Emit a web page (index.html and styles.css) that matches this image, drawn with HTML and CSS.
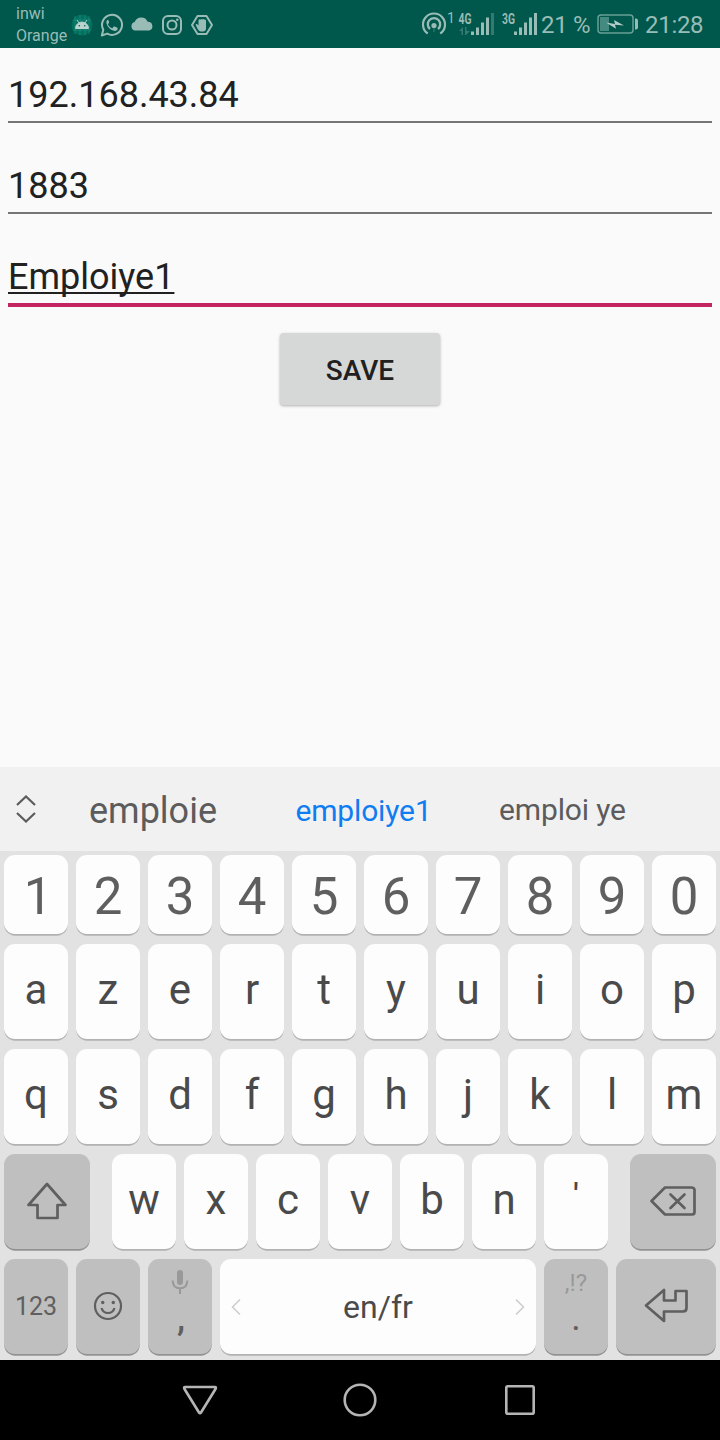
FILE: index.html
```
<!DOCTYPE html>
<html lang="en">
<head>
<meta charset="utf-8">
<title>Connection settings</title>
<link rel="stylesheet" href="styles.css">
</head>
<body>
<div class="screen">
  <header class="status">
    <div class="carriers"><span>inwi</span><span>Orange</span></div>
    <svg class="notifications" width="144" height="26" viewBox="0 0 144 26" fill="none" stroke="#99bcb7">
      <circle cx="11" cy="13" r="10.500" fill="#00705f" stroke="none"/>
      <path d="M4 4v18M9 3v20M14 3v20M18 4v18M2 8h18M2 18h18" stroke="#2b9283" stroke-width=".6"/>
      <path d="M4.500 16.500a6.500 6.500 0 0 1 13 0zM6 8l2 3M16 8l-2 3" fill="#bad3cf" stroke="#bad3cf" stroke-width="1"/>
      <circle cx="8.300" cy="13.800" r=".8" fill="#00574b" stroke="none"/><circle cx="13.700" cy="13.800" r=".8" fill="#00574b" stroke="none"/>
      <path d="M30.800 23.500l1.500-5.800a10 10 0 1 1 3.900 3.900z" stroke-width="2" stroke-linejoin="round"/>
      <path d="M37.400 7.500c-1.500.4-2.300 1.800-1.900 3.700.8 3.600 4.100 7.100 8.200 7.700 1.600.2 2.700-.8 2.900-2.200.1-.7-.1-.9-.6-1.200l-2.500-1.100c-.5-.2-.7 0-1 .4l-.9 1.100c-.3.300-.6.300-1 .1-1.500-.7-2.700-1.800-3.500-3.300-.2-.4-.1-.6.200-.9l.7-1c.2-.3.200-.5.100-.9l-1-2.200c-.2-.3-.3-.3-.7-.2z" fill="#99bcb7" stroke="none"/>
      <path d="M64.500 18.500a4.400 4.400 0 0 1 0-8.500 7 7 0 0 1 13-.3 4.500 4.500 0 0 1 1.500 8.800z" fill="#99bcb7" stroke="none" transform="translate(-.8 0)"/>
      <rect x="92" y="4" width="18" height="18" rx="5" stroke-width="2"/><circle cx="101" cy="13" r="4.500" stroke-width="2"/><circle cx="106.300" cy="7.700" r="1.300" fill="#99bcb7" stroke="none"/>
      <g transform="translate(1 0)"><path d="M125.500 4h9l5.500 9-5.500 9h-9l-5.500-9z" stroke-width="2" stroke-linejoin="round"/>
      <path d="M126.500 8q1-1.200 1.800-.3 1-1.300 2-.3 1-.9 1.800.2 1.300-.5 1.900.8v8q0 2.600-3 3h-2.500q-2-.4-3-2.700l-2-4.300q1-1.200 3 1z" fill="#99bcb7" stroke="none"/></g>
    </svg>
    <svg class="signals" width="118" height="38" viewBox="0 -5 118 38" fill="#99bcb7">
      <g fill="none" stroke="#99bcb7" stroke-width="2.200"><path d="M6.700 22.500a11 11 0 1 1 12.600 0"/><path d="M9 18a6.200 6.200 0 1 1 8 0" stroke-width="2.300"/></g>
      <circle cx="13" cy="14.500" r="2.600"/><path d="M12 16h2v5h-2z" opacity=".2"/>
      <text class="net" x="26" y="11.500">1</text>
      <text class="net bold" x="37.500" y="12.500" textLength="13" lengthAdjust="spacingAndGlyphs">4G</text>
      <path d="M38 20l4-4v8h-1.500v-4zM44 16h1.500v4H49l-4 4h-1z" opacity=".35"/>
      <path d="M50 20.500h3V24h-3zM55 16.500h3V24h-3zM60 11.500h3V24h-3zM65 6.500h3V24h-3z"/><path d="M70 2h3v22h-3z" opacity=".35"/>
      <text class="net bold" x="81" y="12.500" textLength="13" lengthAdjust="spacingAndGlyphs">3G</text>
      <path d="M93 20.500h3V24h-3zM98 16.500h3V24h-3zM103 11.500h3V24h-3zM108 6.500h3V24h-3zM113 2h3v22h-3z"/>
    </svg>
    <span class="percent">21 %</span>
    <svg class="battery" width="42" height="20" viewBox="0 0 42 20">
      <rect x="1" y="1" width="35" height="18" rx="3" fill="none" stroke="#69a098" stroke-width="1.500"/>
      <path d="M3 3h9v14H3z" fill="#458a80"/><path d="M38 4.500h1q2 0 2 2v7q0 2-2 2h-1z" fill="#99bcb7"/>
      <path d="M9 8.500l9 1.500-1-4 10 5.500-9-.8 1 4z" fill="#b2ccc9"/>
    </svg>
    <span class="clock">21:28</span>
  </header>

  <main class="form">
    <div class="field">192.168.43.84</div>
    <div class="field">1883</div>
    <div class="field focused"><span class="composing">Emploiye1</span></div>
    <button class="save">SAVE</button>
  </main>

  <section class="keyboard">
    <div class="suggestions">
      <svg class="expand" width="22" height="28" viewBox="0 0 22 28" fill="none" stroke="#5c5c5c" stroke-width="2.200"><path d="M2 10l9-8.500 9 8.500M2 18l9 8.500 9-8.500"/></svg>
      <span class="word first">emploie</span>
      <span class="word typed">emploiye1</span>
      <span class="word last">emploi ye</span>
    </div>
    <div class="row digits">
      <div class="key one">1</div><div class="key">2</div><div class="key">3</div><div class="key">4</div><div class="key">5</div><div class="key">6</div><div class="key">7</div><div class="key">8</div><div class="key">9</div><div class="key">0</div>
    </div>
    <div class="row">
      <div class="key">a</div><div class="key">z</div><div class="key">e</div><div class="key">r</div><div class="key">t</div><div class="key">y</div><div class="key">u</div><div class="key">i</div><div class="key">o</div><div class="key">p</div>
    </div>
    <div class="row">
      <div class="key">q</div><div class="key">s</div><div class="key">d</div><div class="key">f</div><div class="key">g</div><div class="key">h</div><div class="key">j</div><div class="key">k</div><div class="key">l</div><div class="key">m</div>
    </div>
    <div class="row">
      <div class="key dark shift"><svg width="42" height="38" viewBox="0 0 42 38"><path d="M21 2L2.500 23H11.500V36H31.500V23H39.500z"/></svg></div>
      <div class="key">w</div><div class="key">x</div><div class="key">c</div><div class="key">v</div><div class="key">b</div><div class="key">n</div><div class="key quote">'</div>
      <div class="key dark delete"><svg width="48" height="32" viewBox="0 0 48 32"><path d="M2.500 16L16 2.500H42Q45.500 2.500 45.500 5V27Q45.500 29.500 43 29.500H16zM21.500 9.500l14 13.500M35.500 9.500L21.500 23" stroke-linecap="round"/></svg></div>
    </div>
    <div class="row">
      <div class="key dark mode">123</div>
      <div class="key dark emoji"><svg width="30" height="30" viewBox="0 0 30 30"><circle cx="15" cy="15" r="13"/><path d="M8.500 17q1.500 5 6.500 5t6.500-5"/><circle class="dot" cx="9.700" cy="11.500" r="1.700"/><circle class="dot" cx="20.300" cy="11.500" r="1.700"/></svg></div>
      <div class="key dark stacked"><svg width="18" height="26" viewBox="0 0 18 26"><rect class="mic" x="6" y="1" width="6" height="15" rx="3"/><path class="stand" d="M1.700 11.500q0 7.800 7.300 7.800t7.300-7.800M9 19v6"/></svg><span class="comma">,</span></div>
      <div class="key space"><svg width="10" height="18" viewBox="0 0 10 18"><path d="M9 1.500L1.500 9 9 16.500"/></svg><span>en/fr</span><svg width="10" height="18" viewBox="0 0 10 18"><path d="M1 1.500L8.500 9 1 16.500"/></svg></div>
      <div class="key dark stacked"><span class="hint">,!?</span><span class="period">.</span></div>
      <div class="key dark enter"><svg width="44" height="36" viewBox="0 0 44 36"><path d="M2 18.500L20 3V13.500H31.500V4H42.500V21Q42.500 24.500 39 24.500H20V34z"/></svg></div>
    </div>
  </section>

  <nav class="nav">
    <svg width="36" height="32" viewBox="0 0 36 32"><path d="M3.200 3H32.800Q34.500 3 33.500 5L19 28.500Q18 30 17 28.500L2.500 5Q1.500 3 3.200 3z"/></svg>
    <svg width="36" height="36" viewBox="0 0 36 36"><circle cx="18" cy="18" r="15.300"/></svg>
    <svg width="36" height="36" viewBox="0 0 36 36"><rect x="4.300" y="4.300" width="27.400" height="27.400" rx="1.500"/></svg>
  </nav>
</div>
</body>
</html>
```
FILE: styles.css
```
* { box-sizing: border-box; }
body { margin: 0; font-family: Roboto, "Liberation Sans", sans-serif; background: #fafafa; }
svg { display: block; flex: none; }
.screen { width: 720px; height: 1440px; display: flex; flex-direction: column; background: #fafafa; }

.status { height: 48px; flex: none; display: flex; align-items: center; background: #00574b; color: #99bcb7; font-size: 24px; white-space: nowrap; }
.carriers { width: 55px; margin-left: 16px; display: flex; flex-direction: column; font-size: 16px; line-height: 22px; padding-top: 1px; }
.notifications { margin-top: 2px; }
.signals { margin: 0 0 -1px 206px; }
.net { font-size: 14px; }
.bold { font-weight: 700; }
.percent { width: 56px; margin-left: 2px; padding-top: 2px; letter-spacing: -.3px; }
.clock { margin-left: 6px; padding-top: 2px; letter-spacing: -.3px; }

.form { height: 719px; flex: none; padding: 26px 8px 0; display: flex; flex-direction: column; }
.field { height: 49px; margin-bottom: 42px; border-bottom: 2px solid #757575; color: #212121; font-size: 36px; line-height: 42px; }
.focused { height: 51px; margin-bottom: 26px; border-bottom: 4px solid #c2255f; }
.composing { text-decoration: underline; text-decoration-thickness: 2px; text-underline-offset: 3px; text-decoration-skip-ink: none; }
.save { width: 160px; height: 72px; align-self: center; padding: 2px 0 0; border: 0; border-radius: 4px; background: #d6d8d7; color: #202020; font: 500 28px Roboto, sans-serif; box-shadow: 0 1px 3px rgba(0, 0, 0, .3); }

.keyboard { height: 593px; flex: none; background: #e2e2e2; }
.suggestions { height: 84px; margin-bottom: 4px; display: flex; align-items: center; background: #f1f1f1; color: #5c5c5c; font-size: 30px; }
.expand { margin-left: 15px; }
.word { text-align: center; white-space: nowrap; }
.first { width: 232px; font-size: 36px; padding-top: 4px; }
.typed { width: 189px; color: #0f7df2; padding-top: 2px; letter-spacing: -.15px; }
.last { width: 209px; letter-spacing: -.15px; }
.row { display: flex; gap: 8px; padding: 0 4px; margin-bottom: 10px; }
.key { width: 64px; height: 95px; flex: none; display: flex; align-items: center; justify-content: center; padding-bottom: 4px; border-radius: 11px; background: #fdfdfd; box-shadow: 0 2px 0 -.3px #b2b2b2; color: #4a4a4a; font-size: 42px; }
.digits .key { height: 79px; padding: 4px 0 0; font-size: 51px; color: #5f5f5f; }
.digits .one { padding-left: 4px; }
.dark { background: #bfbfbf; box-shadow: 0 2px 0 -.3px #929292; color: #5f5f5f; }
.dark svg { fill: none; stroke: #5f5f5f; stroke-width: 2.7; stroke-linejoin: round; }
.shift { width: 86px; margin-right: 14px; padding: 0 0 2px; }
.quote { padding: 0 0 15px; font-size: 32px; font-weight: 500; }
.delete { width: 86px; margin-left: 14px; padding: 0 0 2px; }
.mode { font-size: 25px; padding: 0; }
.emoji { padding: 0 0 1px; }
.emoji svg { stroke-width: 2.2; }
.dark .dot { fill: #5f5f5f; stroke: none; }
.stacked { flex-direction: column; justify-content: flex-start; padding: 10px 0 0; }
.dark .mic { fill: #999; stroke: none; }
.dark .stand { stroke: #999; stroke-width: 2; }
.comma { margin: 0 0 0 2px; font-size: 36px; line-height: 46px; font-weight: 500; }
.hint { font-size: 24px; line-height: 28px; color: #999; }
.period { font-size: 36px; line-height: 42px; }
.space { width: 316px; padding: 0 11px; justify-content: space-between; font-size: 32px; }
.space svg { fill: none; stroke: #ccc; stroke-width: 1.5; }
.enter { width: 100px; padding: 0 0 4px; }

.nav { height: 80px; flex: none; background: #000; display: flex; align-items: center; justify-content: center; gap: 124px; }
.nav svg { fill: none; stroke: #b5b5b5; stroke-width: 2.6; }
```
